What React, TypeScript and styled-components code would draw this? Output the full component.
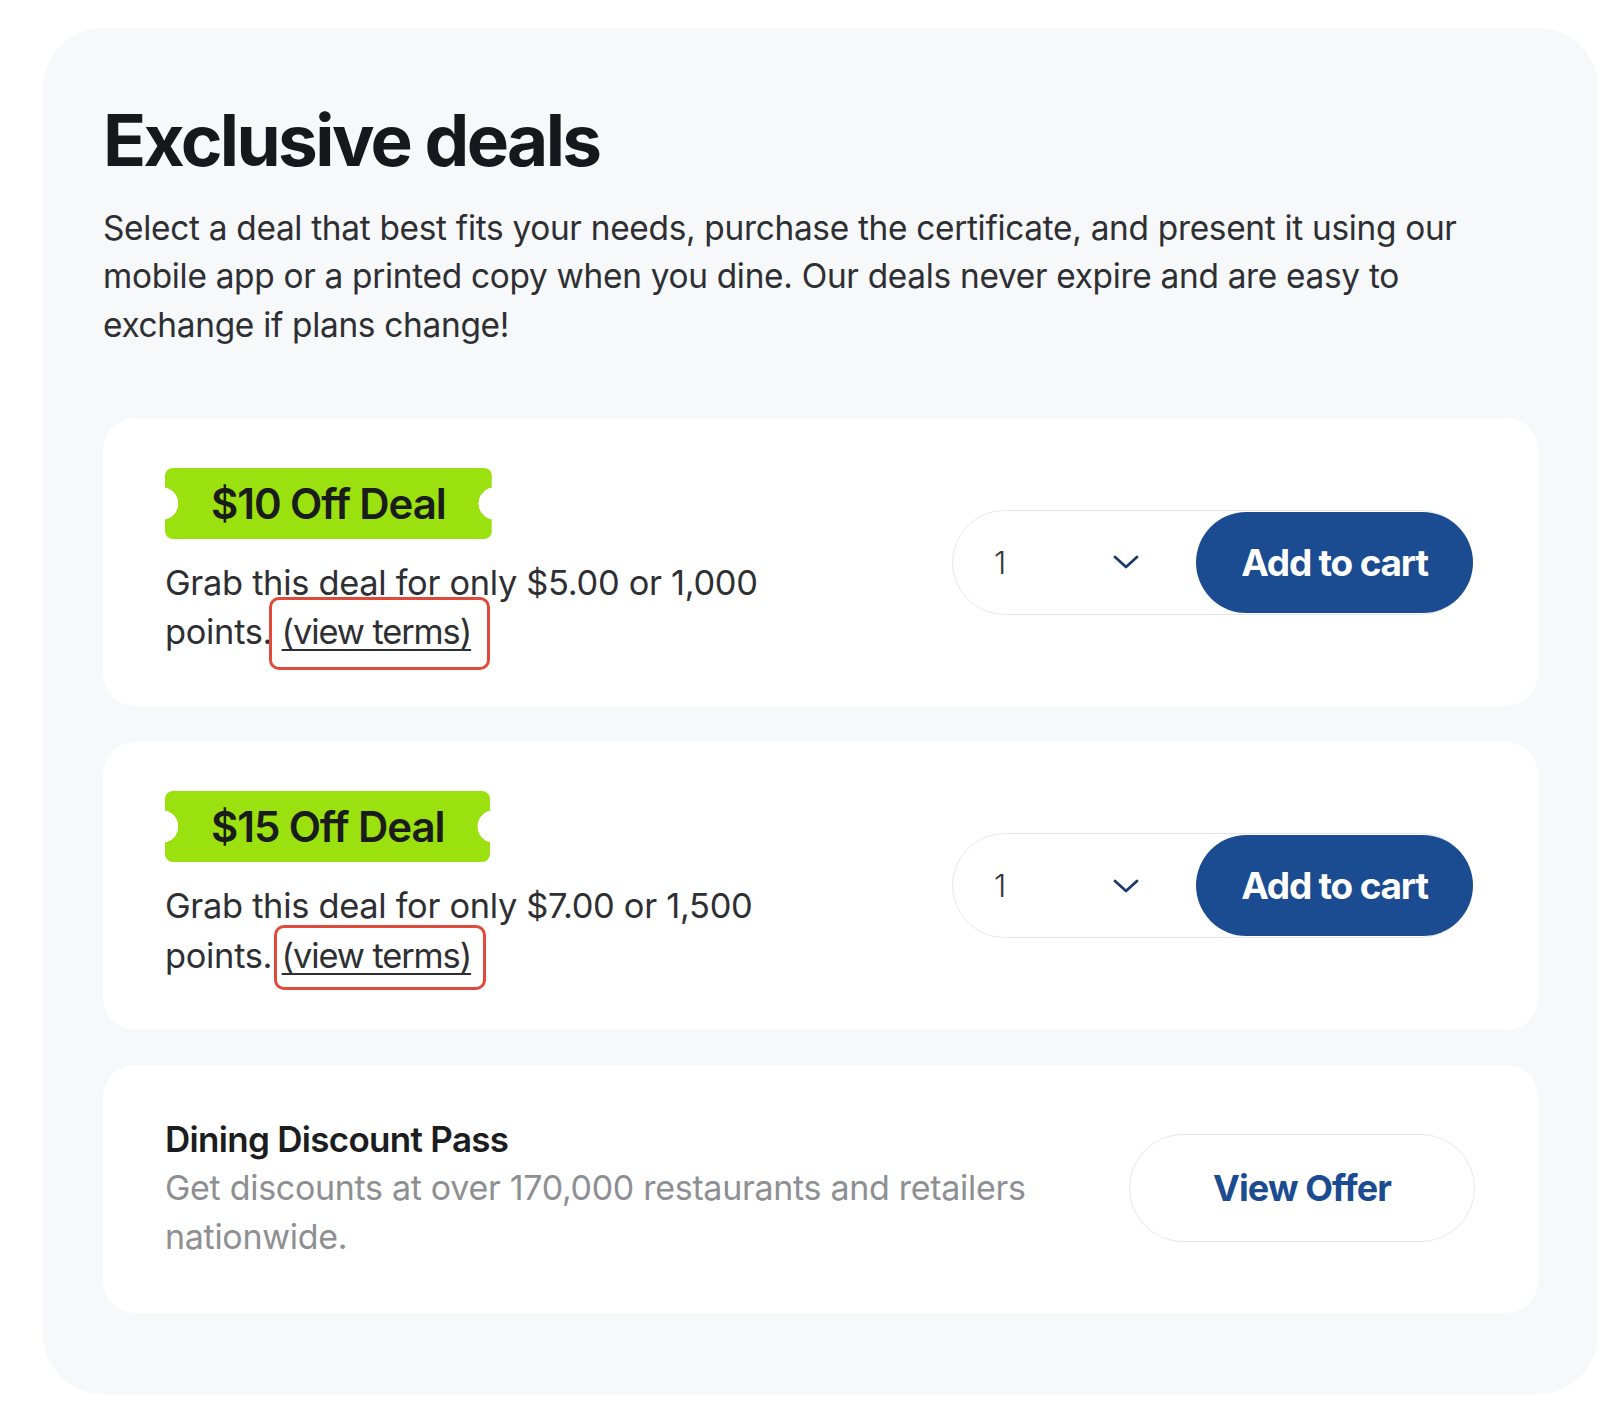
import React from "react";
import styled, { createGlobalStyle } from "styled-components";

const GlobalStyle = createGlobalStyle`
  body {
    margin: 0;
    background: #ffffff;
    font-family: Inter, "Liberation Sans", sans-serif;
    color: #2b2c30;
  }
`;

const Page = styled.div`
  padding: 28px 0 30px 43px;
`;

const Panel = styled.section`
  box-sizing: border-box;
  width: 1555px;
  background: #f7f8fa;
  border-radius: 60px;
  padding: 72px 60px 81px 60px;
`;

const Title = styled.h1`
  margin: 0;
  font-size: 71px;
  line-height: 1.15;
  font-weight: 700;
  letter-spacing: -2.6px;
  color: #17181b;
`;

const Intro = styled.p`
  margin: 22px 0 69px;
  font-size: 33.4px;
  line-height: 48.5px;
  letter-spacing: -0.3px;
  color: #2e2f33;
`;

const DealList = styled.div`
  display: flex;
  flex-direction: column;
  gap: 35.5px;
`;

const Card = styled.div<{ $compact?: boolean }>`
  box-sizing: border-box;
  background: #ffffff;
  border-radius: 32px;
  padding: ${(p) => (p.$compact ? "50px 63px 52px 62px" : "49.5px 65px 49.5px 62px")};
  display: flex;
  align-items: center;
  justify-content: space-between;
`;

const Info = styled.div`
  display: flex;
  flex-direction: column;
  align-items: flex-start;
`;

const Ribbon = styled.div`
  height: 71px;
  padding: 0 46px;
  display: flex;
  align-items: center;
  border-radius: 8px;
  background:
    radial-gradient(circle at -3px 50%, transparent 16px, #9be00f 16.5px) left / 51% 100% no-repeat,
    radial-gradient(circle at calc(100% + 3px) 50%, transparent 16px, #9be00f 16.5px) right / 51% 100% no-repeat;
  font-size: 42px;
  font-weight: 600;
  letter-spacing: -1.1px;
  color: #1a1c1a;
`;

const Desc = styled.p`
  margin: 19px 0 0;
  max-width: 670px;
  font-size: 34.4px;
  line-height: 49.5px;
  letter-spacing: -0.3px;
  color: #2e2f33;
`;

const TermsLink = styled.a<{ $t: number; $r: number; $b: number; $l: number }>`
  position: relative;
  color: #2e2f33;
  letter-spacing: -1.1px;
  text-decoration: underline;
  text-underline-offset: 5px;
  text-decoration-thickness: 2px;

  &::after {
    content: "";
    position: absolute;
    top: ${(p) => p.$t}px;
    right: ${(p) => p.$r}px;
    bottom: ${(p) => p.$b}px;
    left: ${(p) => p.$l}px;
    border: 3px solid #df4a3a;
    border-radius: 10px;
    pointer-events: none;
  }
`;

const Controls = styled.div`
  box-sizing: border-box;
  width: 521px;
  height: 105px;
  display: flex;
  align-items: center;
  border: 1.5px solid #e4e8ee;
  border-radius: 999px;
  background: #ffffff;
`;

const Qty = styled.div`
  flex: 1;
  display: flex;
  align-items: center;
  justify-content: space-between;
  padding: 0 56px 0 41px;
  font-size: 31px;
  font-weight: 300;
  color: #333;
`;

const CartButton = styled.button`
  width: 277px;
  height: 101px;
  margin-right: -1px;
  border: none;
  border-radius: 999px;
  background: #1b4b91;
  color: #ffffff;
  font-family: inherit;
  font-size: 37px;
  font-weight: 700;
  letter-spacing: -1.2px;
  cursor: pointer;
`;

const PassTitle = styled.div`
  font-size: 35px;
  line-height: 49px;
  font-weight: 600;
  letter-spacing: -0.7px;
  color: #1c1d20;
`;

const PassDesc = styled.div`
  max-width: 920px;
  font-size: 34px;
  line-height: 48.5px;
  letter-spacing: -0.3px;
  color: #8e8f93;
`;

const OfferButton = styled.button`
  box-sizing: border-box;
  width: 346px;
  height: 108px;
  border: 1.5px solid #e6e8ec;
  border-radius: 999px;
  background: #ffffff;
  color: #1b4b91;
  font-family: inherit;
  font-size: 36px;
  font-weight: 700;
  letter-spacing: -0.9px;
  cursor: pointer;
`;

const Chevron = () => (
  <svg width="28" height="16" viewBox="0 0 28 16" fill="none">
    <polyline
      points="3,3 14,13 25,3"
      stroke="#1d3a6b"
      strokeWidth="2.8"
      strokeLinecap="round"
      strokeLinejoin="round"
    />
  </svg>
);

const deals = [
  {
    label: "$10 Off Deal",
    price: "$5.00",
    points: "1,000",
    box: { t: -14, r: -19, b: -18, l: -13 },
  },
  {
    label: "$15 Off Deal",
    price: "$7.00",
    points: "1,500",
    box: { t: -10, r: -15, b: -14, l: -8 },
  },
];

const App: React.FC = () => {
  return (
    <Page>
      <GlobalStyle />
      <Panel>
        <Title>Exclusive deals</Title>
        <Intro>
          Select a deal that best fits your needs, purchase the certificate, and
          present it using our mobile app or a printed copy when you dine. Our
          deals never expire and are easy to exchange if plans change!
        </Intro>
        <DealList>
          {deals.map((d) => (
            <Card key={d.label}>
              <Info>
                <Ribbon>{d.label}</Ribbon>
                <Desc>
                  Grab this deal for only {d.price} or {d.points} points.{" "}
                  <TermsLink href="#" $t={d.box.t} $r={d.box.r} $b={d.box.b} $l={d.box.l}>
                    (view terms)
                  </TermsLink>
                </Desc>
              </Info>
              <Controls>
                <Qty>
                  <span>1</span>
                  <Chevron />
                </Qty>
                <CartButton>Add to cart</CartButton>
              </Controls>
            </Card>
          ))}
          <Card $compact>
            <Info>
              <PassTitle>Dining Discount Pass</PassTitle>
              <PassDesc>
                Get discounts at over 170,000 restaurants and retailers
                nationwide.
              </PassDesc>
            </Info>
            <OfferButton>View Offer</OfferButton>
          </Card>
        </DealList>
      </Panel>
    </Page>
  );
};

export default App;
